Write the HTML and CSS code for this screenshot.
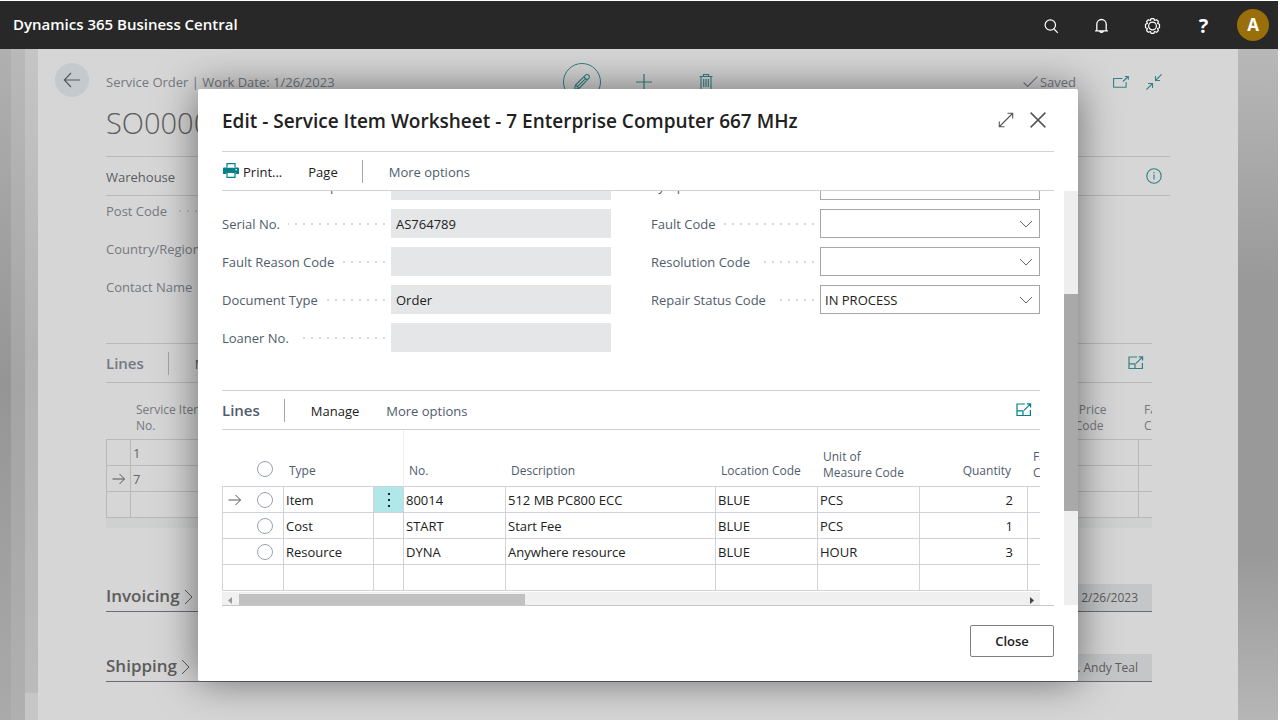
FILE: index.html
```html
<!DOCTYPE html>
<html lang="en">
<head>
<meta charset="utf-8">
<title>Dynamics 365 Business Central</title>
<link rel="stylesheet" href="styles.css">
</head>
<body>
<header class="topbar">
  <a class="brand" href="#">Dynamics 365 Business Central</a>
  <nav class="topbar-actions" aria-label="Global">
    <button class="top-button" aria-label="Search"><svg width="18" height="18" viewBox="0 0 18 18" fill="none" stroke="currentColor" stroke-width="1.2"><circle cx="8.3" cy="8" r="5.2"/><path d="M12 12l3.8 3.8"/></svg></button>
    <button class="top-button" aria-label="Notifications"><svg width="18" height="18" viewBox="0 0 18 18" fill="none" stroke="currentColor" stroke-width="1.3"><path d="M3.800 13.500V7.200a4.700 4.700 0 0 1 9.400 0v6.300M2.100 13.900h12.800M6.800 14.200a1.800 1.800 0 0 0 3.400 0"/></svg></button>
    <button class="top-button" aria-label="Settings"><svg width="18" height="18" viewBox="0 0 18 18" fill="none" stroke="currentColor" stroke-width="1.200" stroke-linejoin="round"><circle cx="8.500" cy="9" r="3.900"/><path d="M7.200 1.200h2.600l.8 1.900 2-.8 1.800 1.800-.8 2 1.900.8v3.400l-1.900.8.8 2-1.800 1.800-2-.8-.8 1.900H7.200l-.8-1.900-2 .8-1.800-1.800.8-2-1.900-.8V6.900l1.900-.8-.8-2 1.800-1.800 2 .8z" transform="translate(0 .4)"/></svg></button>
    <button class="top-button help" aria-label="Help">?</button>
    <button class="avatar" aria-label="Account">A</button>
  </nav>
</header>

<div class="workspace">
  <div class="layer layer-far"></div>
  <div class="layer layer-mid"></div>
  <div class="layer layer-near"></div>

  <main class="page">
    <div class="page-gutter">
      <button class="back" aria-label="Back"><svg width="18" height="16" viewBox="0 0 18 16" fill="none" stroke="currentColor" stroke-width="1.1"><path d="M17 8H1.500M8 1L1.300 8 8 15"/></svg></button>
    </div>
    <div class="page-content">
      <div class="page-head">
        <span class="page-caption">Service Order | Work Date: 1/26/2023</span>
        <div class="page-tools">
          <button class="tool tool-round" aria-label="Edit"><svg width="18" height="18" viewBox="0 0 18 18" fill="none" stroke="currentColor" stroke-width="1.100"><path d="M1.500 16.500l1-4.500L12.500 2.200a2 2 0 0 1 3.200 3.200L6 15.400zM11 3.800l3.200 3.200M2.500 12l3.500 3.400M4.500 13.700l8-8"/></svg></button>
          <button class="tool" aria-label="New"><svg width="18" height="18" viewBox="0 0 18 18" fill="none" stroke="currentColor" stroke-width="1.200"><path d="M9 1v16M1 9h16"/></svg></button>
          <button class="tool" aria-label="Delete"><svg width="14" height="18" viewBox="0 0 14 18" fill="none" stroke="currentColor" stroke-width="1.100"><path d="M.5 3.500h13M4.500 3V1.500h5V3M2 3.500v13h10v-13M4.700 6v8M7 6v8M9.300 6v8"/></svg></button>
        </div>
        <div class="page-state">
          <span class="saved"><svg width="15" height="12" viewBox="0 0 15 12" fill="none" stroke="currentColor" stroke-width="1.100"><path d="M.6 6.500l4 4L14.400.7"/></svg>Saved</span>
          <button class="tool-link" aria-label="Open in new window"><svg width="16" height="14" viewBox="0 0 16 14" fill="none" stroke="currentColor" stroke-width="1.100"><path d="M9.500 3.500H.6v8.800h12.500V7M10 6.500l5.200-5M11.800 1.500h3.500v3.300"/></svg></button>
          <button class="tool-link" aria-label="Collapse"><svg width="16" height="16" viewBox="0 0 16 16" fill="none" stroke="currentColor" stroke-width="1.100"><path d="M15.600.4L9.500 6.500M9.500 2v4.500H14M.4 15.600l6.100-6.100M2 9.500h4.500V14"/></svg></button>
        </div>
      </div>
      <h1 class="page-title">SO0000</h1>
      <div class="bar page-bar">
        <button class="bar-button dim">Warehouse</button>
        <button class="tool-link bar-end info" aria-label="Details"><svg width="16" height="16" viewBox="0 0 16 16" fill="none" stroke="currentColor" stroke-width="1.100"><circle cx="8" cy="8" r="7.200"/><path d="M8 6.500v5M8 4v1.300"/></svg></button>
      </div>
      <div class="page-body">
        <div class="page-fields">
          <div class="page-field"><span>Post Code</span><i class="dots"></i></div>
          <div class="page-field"><span>Country/Region</span><i class="dots"></i></div>
          <div class="page-field"><span>Contact Name</span><i class="dots"></i></div>
        </div>
        <div class="bar page-lines-bar">
          <h2 class="part-title">Lines</h2>
          <button class="bar-button bar-sep dim">Manage</button>
          <button class="tool-link bar-end expand" aria-label="Expand lines"><svg width="16" height="14" viewBox="0 0 16 14" fill="none" stroke="currentColor" stroke-width="1.200"><path d="M9 1H1v11.500h13.400V7M1 7.800h6v4.700M8 7.400l6.600-6.500M10.800.8h3.800v3.800"/></svg></button>
        </div>
        <table class="grid page-grid">
          <colgroup><col class="w-24"><col><col class="w-108"><col class="w-14"></colgroup>
          <thead><tr><th></th><th>Service Item<br>No.</th><th>Service Price<br>Group Code</th><th>Fault<br>Code</th></tr></thead>
          <tbody>
            <tr><td></td><td>1</td><td></td><td></td></tr>
            <tr><td class="mark"><svg width="14" height="12" viewBox="0 0 14 12" fill="none" stroke="currentColor" stroke-width="1"><path d="M.5 6h12M7.500 1l5 5-5 5"/></svg></td><td>7</td><td></td><td></td></tr>
            <tr><td></td><td></td><td></td><td></td></tr>
          </tbody>
        </table>
        <div class="grid-foot"></div>
        <section class="fasttab first">
          <button class="fasttab-title">Invoicing<svg width="9" height="16" viewBox="0 0 9 16" fill="none" stroke="currentColor" stroke-width="1"><path d="M1 1l7 7-7 7"/></svg></button>
          <span class="fasttab-value">2/26/2023</span>
        </section>
        <section class="fasttab">
          <button class="fasttab-title">Shipping<svg width="9" height="16" viewBox="0 0 9 16" fill="none" stroke="currentColor" stroke-width="1"><path d="M1 1l7 7-7 7"/></svg></button>
          <span class="fasttab-value">Mr. Andy Teal</span>
        </section>
      </div>
    </div>
  </main>

  <div class="overlay">
    <div class="dialog" role="dialog" aria-modal="true" aria-labelledby="dialog-title">
      <div class="dialog-head">
        <h2 id="dialog-title">Edit - Service Item Worksheet - 7 Enterprise Computer 667 MHz</h2>
        <button class="head-button" aria-label="Maximize"><svg width="16" height="16" viewBox="0 0 16 16" fill="none" stroke="currentColor" stroke-width="1.100"><path d="M1.500 14.500l13-13M9.500 1.300h5.200v5.200M1.300 9.500v5.200h5.200"/></svg></button>
        <button class="head-button" aria-label="Close dialog"><svg width="16" height="16" viewBox="0 0 16 16" fill="none" stroke="currentColor" stroke-width="1.500"><path d="M.6.6l14.800 14.800M15.400.6L.6 15.400"/></svg></button>
      </div>
      <div class="bar dialog-bar">
        <button class="bar-button print"><svg width="16" height="15" viewBox="0 0 16 15"><path class="fill" d="M1 4.500h14a1 1 0 0 1 1 1V11h-3.500V9h-9v2H0V5.500a1 1 0 0 1 1-1z"/><path class="line" d="M4 4.500V.6h8v3.900M4 9.400v5h8v-5z"/><path class="hole" d="M12.500 6h1.500v1.300h-1.500z"/></svg>Print...</button>
        <button class="bar-button page-menu">Page</button>
        <button class="bar-button bar-sep muted">More options</button>
      </div>
      <div class="dialog-body">
        <div class="dialog-content">
          <form class="form">
            <div class="form-col">
              <div class="field"><label for="f-group">Service Item Group Code</label><i class="dots"></i><input id="f-group" readonly></div>
              <div class="field"><label for="f-serial">Serial No.</label><i class="dots"></i><input id="f-serial" value="AS764789" readonly></div>
              <div class="field"><label for="f-reason">Fault Reason Code</label><i class="dots"></i><input id="f-reason" readonly></div>
              <div class="field"><label for="f-doc">Document Type</label><i class="dots"></i><input id="f-doc" value="Order" readonly></div>
              <div class="field"><label for="f-loaner">Loaner No.</label><i class="dots"></i><input id="f-loaner" readonly></div>
            </div>
            <div class="form-col">
              <div class="field"><label for="f-symptom">Symptom Code</label><i class="dots"></i><select id="f-symptom"><option></option></select></div>
              <div class="field"><label for="f-fault">Fault Code</label><i class="dots"></i><span class="pick"><select id="f-fault"><option></option></select><svg width="14" height="8" viewBox="0 0 14 8"><path d="M1 1l6 6 6-6"/></svg></span></div>
              <div class="field"><label for="f-resolution">Resolution Code</label><i class="dots"></i><span class="pick"><select id="f-resolution"><option></option></select><svg width="14" height="8" viewBox="0 0 14 8"><path d="M1 1l6 6 6-6"/></svg></span></div>
              <div class="field"><label for="f-repair">Repair Status Code</label><i class="dots"></i><span class="pick"><select id="f-repair"><option>IN PROCESS</option></select><svg width="14" height="8" viewBox="0 0 14 8"><path d="M1 1l6 6 6-6"/></svg></span></div>
            </div>
          </form>
          <div class="bar lines-bar">
            <h3 class="part-title">Lines</h3>
            <button class="bar-button bar-sep">Manage</button>
            <button class="bar-button muted">More options</button>
            <button class="tool-link bar-end expand" aria-label="Expand lines"><svg width="16" height="14" viewBox="0 0 16 14" fill="none" stroke="currentColor" stroke-width="1.200"><path d="M9 1H1v11.500h13.400V7M1 7.800h6v4.700M8 7.400l6.600-6.500M10.800.8h3.800v3.800"/></svg></button>
          </div>
          <div class="grid-scroll">
            <table class="grid lines-grid">
              <colgroup><col class="w-24"><col class="w-37"><col class="w-90"><col class="w-30"><col class="w-102"><col class="w-210"><col class="w-102"><col class="w-102"><col class="w-108"><col class="w-102"></colgroup>
              <thead><tr><th></th><th class="check"><input type="radio" aria-label="Select all"></th><th>Type</th><th></th><th class="freeze">No.</th><th>Description</th><th>Location Code</th><th>Unit of<br>Measure Code</th><th class="num">Quantity</th><th>Fault<br>Code</th></tr></thead>
              <tbody>
                <tr><td class="mark"><svg width="14" height="12" viewBox="0 0 14 12" fill="none" stroke="currentColor" stroke-width="1"><path d="M.5 6h12M7.500 1l5 5-5 5"/></svg></td><td class="check"><input type="radio" name="line" aria-label="Select 80014"></td><td>Item</td><td class="menu-cell"><button class="row-menu" aria-label="More options for the line"><svg width="4" height="14" viewBox="0 0 4 14" fill="currentColor"><path d="M1 0h2v2H1zM1 6h2v2H1zM1 12h2v2H1z"/></svg></button></td><td>80014</td><td>512 MB PC800 ECC</td><td>BLUE</td><td>PCS</td><td class="num">2</td><td></td></tr>
                <tr><td></td><td class="check"><input type="radio" name="line" aria-label="Select START"></td><td>Cost</td><td></td><td>START</td><td>Start Fee</td><td>BLUE</td><td>PCS</td><td class="num">1</td><td></td></tr>
                <tr><td></td><td class="check"><input type="radio" name="line" aria-label="Select DYNA"></td><td>Resource</td><td></td><td>DYNA</td><td>Anywhere resource</td><td>BLUE</td><td>HOUR</td><td class="num">3</td><td></td></tr>
                <tr><td></td><td class="check"></td><td></td><td></td><td></td><td></td><td></td><td></td><td></td><td></td></tr>
              </tbody>
            </table>
          </div>
          <div class="hscroll">
            <svg class="arrow-left" width="17" height="13" viewBox="0 0 17 13"><path d="M10 5v7L6 8.500z"/></svg>
            <div class="hscroll-track"><div class="hscroll-thumb"></div></div>
            <svg class="arrow-right" width="17" height="13" viewBox="0 0 17 13"><path d="M7 5v7l4-3.500z"/></svg>
          </div>
        </div>
        <div class="vscroll"><div class="vscroll-thumb"></div></div>
      </div>
      <div class="dialog-foot"><button class="close-button">Close</button></div>
    </div>
  </div>
</div>
</body>
</html>
```

FILE: styles.css
```css
* { box-sizing: border-box; }

html, body { height: 100%; }

body {
  margin: 0;
  padding: 1px 2px 0 0;
  display: flex;
  flex-direction: column;
  overflow: hidden;
  background: #fff;
  color: #212121;
  font: 13px/18px "Open Sans", "Noto Sans", sans-serif;
}

button, input, select { font: inherit; color: inherit; }
button { padding: 0; border: 0; background: none; white-space: nowrap; }
svg { display: block; flex: none; }
h1, h2, h3 { margin: 0; }

/* Top bar */
.topbar {
  flex: none;
  height: 48px;
  padding: 0 9px 0 13px;
  display: flex;
  align-items: center;
  justify-content: space-between;
  background: #282828;
  color: #fff;
}
.brand { color: #fff; font-size: 15px; font-weight: 600; text-decoration: none; padding-bottom: 3px; }
.topbar-actions { display: flex; align-items: center; }
.top-button { width: 51px; height: 48px; display: grid; place-items: center; padding-top: 2px; }
.top-button.help { font-size: 20px; font-weight: 700; }
.avatar { width: 32px; height: 32px; margin-left: 8px; border-radius: 50%; background: #986f0b; font-size: 17px; font-weight: 700; }

/* Stacked pages behind the dialog */
.workspace {
  position: relative;
  flex: 1;
  min-height: 0;
  display: flex;
  padding-right: 40px;
  overflow: hidden;
  background: linear-gradient(#b8b8b8, #999 35%, #999 75%, #b6b6b6);
}
.layer-far { width: 11px; background: linear-gradient(#b0b0b0, #959595 50%, #aaa); }
.layer-mid { width: 14px; background: linear-gradient(#b9b9b9, #a4a4a4 50%, #b0b0b0); }
.layer-near { width: 13px; background: linear-gradient(#c5c5c5, #b3b3b3 45%, #bbb 96%, #c6c6c6 96%); }

.page { flex: 1; display: flex; background: #d6d6d6; color: #666; }
.page-gutter { width: 68px; padding-top: 14px; }
.back { width: 34px; height: 34px; margin: 0 auto; display: grid; place-items: center; border-radius: 50%; background: #c4c9ce; color: #555; }
.page-content { flex: 1; min-width: 0; padding: 14px 68px 0 0; }
.page-head { height: 38px; display: grid; grid-template-columns: 1fr auto 1fr; align-items: center; }
.page-caption { color: #74787f; }
.page-tools { display: flex; align-items: center; gap: 24px; padding-left: 12px; }
.tool { width: 38px; height: 38px; display: grid; place-items: center; color: #2f8286; }
.tool-round { border: 1px solid #2f8286; border-radius: 50%; }
.page-state { display: flex; align-items: center; justify-content: flex-end; gap: 17px; padding-right: 8px; }
.saved { display: flex; align-items: center; gap: 2px; margin-right: 20px; color: #74787f; }
.tool-link { color: #2f8286; }
.page-title { height: 44px; margin-bottom: 11px; font-size: 29px; line-height: 44px; font-weight: 300; color: #5c5c5c; }

.bar { height: 40px; display: flex; align-items: center; border-top: 1px solid #d0d3d9; border-bottom: 1px solid #d0d3d9; }
.bar-button { padding-top: 2px; }
.bar-sep { position: relative; margin-left: 51px; }
.bar-sep::before { content: ""; position: absolute; left: -27px; top: -1px; width: 1px; height: 23px; background: #a0a6b2; }
.bar-end { margin-left: auto; }
.expand { margin-right: 8px; }
.info { margin-right: 8px; }
.dim { color: #5a5d61; }
.muted { color: #505c6d; }
.part-title { font-size: 15px; line-height: 20px; font-weight: 600; color: #505c6d; }

.page .bar { border-color: #b9b9b9; }
.page .part-title { color: #737a84; }
.page-body { padding-right: 18px; }
.page-fields { display: grid; gap: 8px; width: 389px; margin-bottom: 41px; color: #74787f; }
.page-field { width: 169px; height: 30px; display: flex; align-items: center; gap: 8px; }

.dots {
  flex: 1;
  height: 2px;
  margin-right: 6px;
  background: repeating-linear-gradient(to left, #d6d9dc 0 2px, transparent 2px 8px);
}
.page .dots { background: repeating-linear-gradient(to left, #bbb 0 2px, transparent 2px 8px); }

.grid { width: 100%; table-layout: fixed; border-spacing: 0; }
.grid th { height: 57px; padding: 0 0 5px 6px; vertical-align: bottom; text-align: left; font-size: 12px; line-height: 16px; font-weight: 400; color: #505c6d; border-bottom: 1px solid #d0d3d9; white-space: nowrap; overflow: hidden; }
.grid td { height: 26px; padding: 0 0 0 2px; border-left: 1px solid #d0d3d9; border-bottom: 1px solid #d0d3d9; white-space: nowrap; overflow: hidden; }
.grid .mark { padding: 0 0 0 5px; color: #555; }
.page-grid th, .page-grid td { border-color: #b9b9b9; }
.page-grid th { color: #74787f; }
.grid-foot { height: 10px; background: #ced1d0; }

.w-14 { width: 14px; }
.w-24 { width: 24px; }
.w-30 { width: 30px; }
.w-37 { width: 37px; }
.w-90 { width: 90px; }
.w-102 { width: 102px; }
.w-108 { width: 108px; }
.w-210 { width: 210px; }

.fasttab { height: 28px; margin-top: 42px; display: flex; justify-content: space-between; border-bottom: 1px solid #6b6b75; }
.fasttab.first { margin-top: 56px; }
.fasttab-title { display: flex; align-items: center; gap: 4px; padding-bottom: 4px; font-size: 17px; line-height: 24px; font-weight: 600; color: #5c5c5c; }
.fasttab-title svg { margin-top: 3px; }
.fasttab-value { width: 220px; padding-right: 14px; font-size: 12px; line-height: 27px; text-align: right; background: #c5c6c8; color: #5c5c5c; }

/* Dialog */
.overlay { position: absolute; inset: 0; display: flex; justify-content: center; padding: 40px 26px 39px 24px; }
.dialog { width: 100%; max-width: 880px; display: flex; flex-direction: column; border-radius: 2px; background: #fff; box-shadow: 0 0 40px rgba(0, 0, 0, .5); overflow: hidden; }
.dialog-head { height: 62px; flex: none; display: flex; align-items: center; gap: 16px; padding: 0 32px 0 24px; color: #555; }
.dialog-head h2 { flex: 1; font-size: 19px; line-height: 26px; font-weight: 600; color: #212121; padding-top: 2px; }
.dialog-bar { flex: none; margin: 0 24px; }
.print { display: flex; align-items: center; gap: 4px; padding-left: 1px; }
.print svg { margin-bottom: 3px; }
.print .fill { fill: #008089; }
.print .line { fill: #fff; stroke: #008089; stroke-width: 1.2; }
.print .hole { fill: #fff; }
.page-menu { margin-left: 26px; }

.dialog-body { flex: 1; min-height: 0; display: flex; gap: 24px; padding-left: 24px; overflow: hidden; }
.dialog-content { flex: 1; min-width: 0; }
.form { margin: -20px 0 38px; display: grid; grid-template-columns: 1fr 1fr; gap: 40px; }
.form-col { display: grid; align-content: start; gap: 9px; }
.field { height: 29px; display: grid; grid-template-columns: auto minmax(0, 1fr) 220px; align-items: center; }
.field label { color: #505c6d; padding-right: 8px; white-space: nowrap; }
.field input { width: 100%; height: 29px; padding: 0 5px; border: 0; border-radius: 0; background: #e5e6e8; }
.field select { width: 100%; height: 29px; padding: 0 4px; border: 1px solid #a6a6a6; border-radius: 0; background: #fff; appearance: none; }
.pick { display: grid; align-items: center; }
.pick select, .pick svg { grid-area: 1 / 1; }
.pick svg { justify-self: end; margin-right: 7px; fill: none; stroke: #666; pointer-events: none; }

.lines-bar .bar-button + .bar-button { margin-left: 27px; }
.lines-bar .tool-link { color: #008089; }
.grid-scroll { overflow: hidden; }
.lines-grid { width: 907px; }
.lines-grid .freeze { border-left: 1px solid #eee; padding-left: 5px; }
.lines-grid th:not(:has(br)) { padding-bottom: 7px; }
.grid .num { text-align: right; padding-right: 14px; }
.grid th.num { padding-right: 16px; }
.grid .check { border-left: 0; padding: 0 0 0 11px; }
.lines-grid thead th.check { padding-bottom: 9px; }
.check input { display: block; width: 16px; height: 16px; margin: 0; appearance: none; border: 1px solid #9aa1ac; border-radius: 50%; background: #fff; }
.grid .menu-cell { padding: 0; }
.row-menu { width: 100%; height: 25px; display: grid; place-items: center; background: #b0e8ea; }

.hscroll { height: 13px; margin-top: 1px; display: flex; background: #f0f0f0; }
.hscroll-track { flex: 1; padding-top: 2px; }
.hscroll-thumb { width: 286px; height: 11px; background: #c1c1c1; }
.arrow-left { fill: #999; }
.arrow-right { fill: #444; }

.vscroll { width: 14px; padding-top: 103px; background: #eee; }
.vscroll-thumb { height: 217px; background: #a9a9a9; }

.dialog-foot { flex: none; margin: 0 24px; padding: 19px 0 24px; display: flex; justify-content: flex-end; border-top: 1px solid #c8c8c8; }
.close-button { width: 84px; height: 32px; border: 1px solid #808080; border-radius: 2px; font-weight: 600; }
```
